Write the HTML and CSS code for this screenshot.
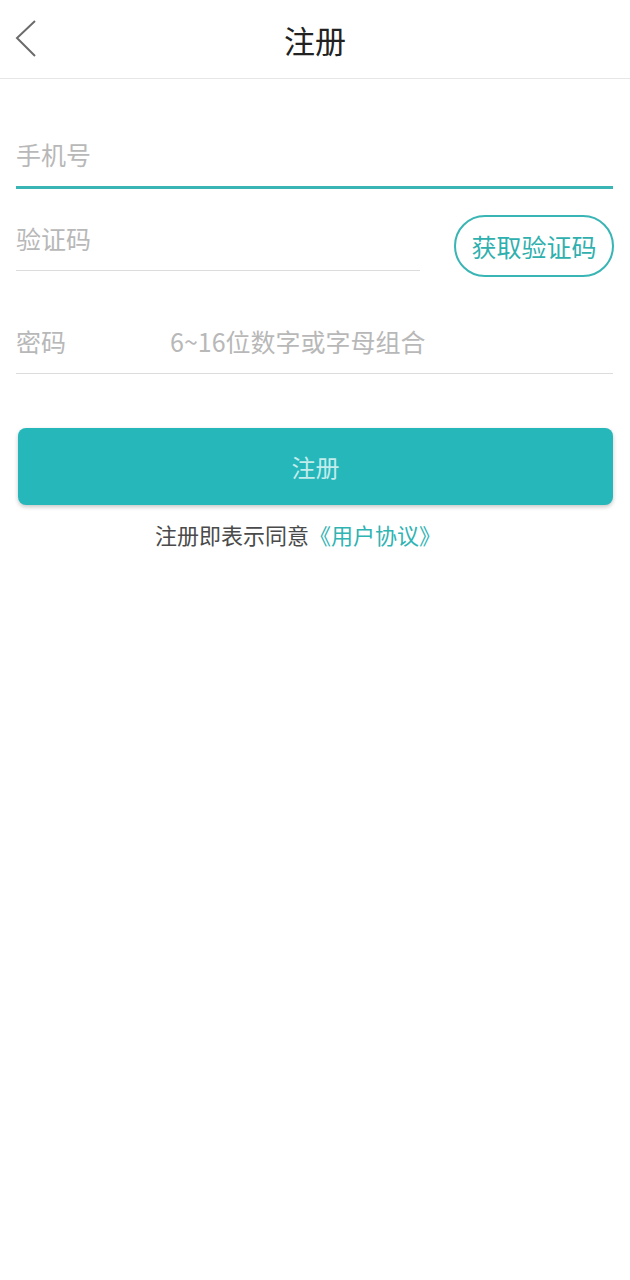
FILE: index.html
```html
<!DOCTYPE html>
<html lang="zh-CN">
<head>
<meta charset="utf-8">
<title>注册</title>
<link rel="stylesheet" href="styles.css">
</head>
<body>
<header class="topbar">
  <span class="back">
    <svg width="24" height="40" viewBox="0 0 24 40"><polyline points="20,2 2,19 20,37" fill="none" stroke="#6b6b6b" stroke-width="2"/></svg>
  </span>
  <h1 class="title">注册</h1>
</header>
<main class="form">
  <div class="field field-phone">
    <span class="placeholder">手机号</span>
  </div>
  <div class="code-row">
    <div class="field field-code">
      <span class="placeholder">验证码</span>
    </div>
    <button class="code-btn">获取验证码</button>
  </div>
  <div class="field field-pwd">
    <span class="label">密码</span>
    <span class="placeholder">6~16位数字或字母组合</span>
  </div>
  <button class="submit">注册</button>
  <p class="agree">注册即表示同意<span class="link">《用户协议》</span></p>
</main>
</body>
</html>
```
FILE: styles.css
```css
* { box-sizing: border-box; }
html, body { margin: 0; padding: 0; background: #fff; }
body {
  font-family: "Noto Sans CJK SC", "Noto Sans", sans-serif;
  width: 630px;
}
.topbar {
  height: 79px;
  border-bottom: 1px solid #e6e6e6;
  display: flex;
  align-items: center;
  justify-content: center;
  position: relative;
}
.back {
  position: absolute;
  left: 15px;
  top: 19px;
  width: 24px;
  height: 40px;
}
.back svg { display: block; }
.title {
  margin: 0;
  font-size: 31px;
  font-weight: 400;
  color: #222;
  line-height: 1;
}
.form { padding: 0 17px 0 16px; }
.field {
  display: flex;
  align-items: center;
  height: 50px;
  padding-bottom: 10px;
  font-size: 25px;
  color: #b8b8b8;
  border-bottom: 1px solid #dcdcdc;
}
.placeholder, .label { line-height: 40px; }
.field-phone {
  margin-top: 56px;
  height: 54px;
  padding-bottom: 13px;
  border-bottom: 3px solid #38b5b4;
}
.code-row {
  display: flex;
  align-items: flex-start;
  margin-top: 26px;
}
.field-code {
  width: 404px;
  margin-top: 4px;
  height: 52px;
  padding-bottom: 13px;
}
.code-btn {
  margin-left: auto;
  margin-right: -1px;
  width: 160px;
  height: 62px;
  border: 2px solid #38b5b4;
  border-radius: 31px;
  background: #fff;
  color: #2fb0ae;
  font-family: inherit;
  font-size: 25px;
  padding: 0;
  line-height: 1;
}
.field-pwd {
  margin-top: 45px;
  height: 52px;
  padding-bottom: 13px;
}
.label { width: 154px; flex: none; }
.submit {
  display: block;
  margin: 54px 1px 0 2px;
  width: 595px;
  height: 77px;
  border: none;
  border-radius: 8px;
  background: #26b7bb;
  color: #c3ecec;
  font-family: inherit;
  font-size: 24px;
  box-shadow: 0 2px 4px rgba(0,0,0,0.22);
  padding: 0;
}
.agree {
  margin: 14px 0 0;
  text-align: center;
  font-size: 22px;
  line-height: 30px;
  color: #4a4a4a;
  padding-right: 33px;
}
.link { color: #2fb3b3; }
```
